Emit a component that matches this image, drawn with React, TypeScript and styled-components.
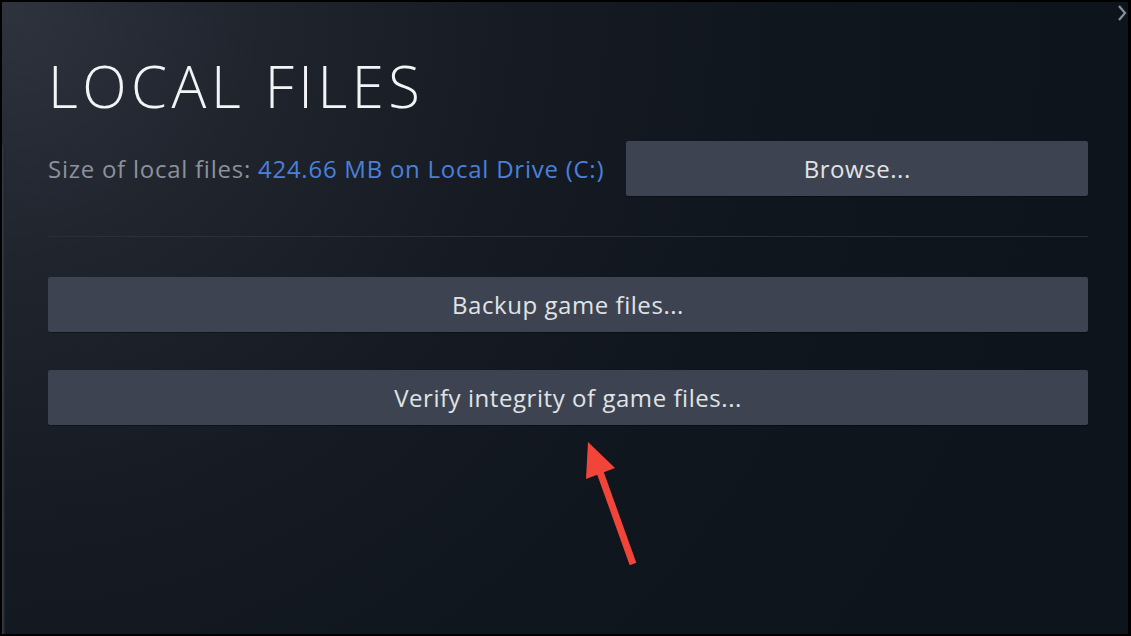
import React from "react";
import styled, { createGlobalStyle } from "styled-components";

const Global = createGlobalStyle`
  html, body { margin: 0; padding: 0; background: #000; }
  body { width: 1131px; height: 636px; overflow: hidden; }
  #root { width: 1131px; height: 636px; }
`;

const Frame = styled.div`
  box-sizing: border-box;
  width: 1131px;
  height: 636px;
  border: 2px solid #000;
  border-right-width: 3px;
  position: relative;
  overflow: hidden;
`;

const Panel = styled.div`
  box-sizing: border-box;
  width: 100%;
  height: 100%;
  padding: 55px 40px 0 46px;
  display: flex;
  flex-direction: column;
  font-family: "Open Sans", "Noto Sans", sans-serif;
  background: radial-gradient(
    circle at 0 0,
    #2e333e 0px,
    #20242d 260px,
    #161b23 520px,
    #10161e 780px,
    #0e141c 1100px
  );
  position: relative;
  &::before {
    content: "";
    position: absolute;
    left: 0;
    top: 143px;
    bottom: 0;
    width: 3px;
    background: linear-gradient(to right, #3a3f4a, #1c2028);
  }
`;

const Title = styled.h1`
  margin: 0;
  font-size: 58px;
  line-height: 57px;
  font-weight: 300;
  letter-spacing: 4.5px;
  color: #f2f4f6;
`;

const SizeRow = styled.div`
  margin-top: 27px;
  display: flex;
  align-items: center;
  gap: 22px;
`;

const SizeLabel = styled.div`
  flex: 1;
  font-size: 24px;
  letter-spacing: 0.75px;
  color: #8b929b;
  white-space: nowrap;
`;

const SizeValue = styled.span`
  color: #4a80dc;
`;

const Button = styled.div<{ $width?: number }>`
  box-sizing: border-box;
  height: 55px;
  ${(p) => (p.$width ? `width: ${p.$width}px; flex: none;` : "width: 100%;")}
  background: #3d4350;
  border-radius: 2px;
  display: flex;
  align-items: center;
  justify-content: center;
  font-size: 24px;
  letter-spacing: 0.55px;
  color: #e0e3e6;
  box-shadow: 0 1px 0 rgba(0, 0, 0, 0.35);
`;

const Divider = styled.div`
  margin-top: 40px;
  height: 1px;
  background: #2a2f38;
`;

const ActionList = styled.div`
  margin-top: 40px;
  display: flex;
  flex-direction: column;
  gap: 38px;
`;

const Close = styled.div`
  position: absolute;
  top: 2px;
  right: 0px;
  width: 12px;
  height: 18px;
`;

const Arrow = styled.svg`
  position: absolute;
  left: 576px;
  top: 434px;
`;

export default function App() {
  return (
    <>
      <Global />
      <Frame>
        <Panel>
          <Title>LOCAL FILES</Title>
          <SizeRow>
            <SizeLabel>
              Size of local files: <SizeValue>424.66 MB on Local Drive (C:)</SizeValue>
            </SizeLabel>
            <Button $width={462}>Browse...</Button>
          </SizeRow>
          <Divider />
          <ActionList>
            <Button>Backup game files...</Button>
            <Button>Verify integrity of game files...</Button>
          </ActionList>
          <Close>
            <svg width="12" height="18" viewBox="0 0 12 18">
              <path d="M3 2 L9 9 L3 16" fill="none" stroke="#8a9099" strokeWidth="2.2" />
            </svg>
          </Close>
        </Panel>
        <Arrow width="70" height="140" viewBox="0 0 70 140">
          <polygon points="10,6 8,43 37,32" fill="#f2453a" />
          <line x1="22" y1="36" x2="55" y2="128" stroke="#f2453a" strokeWidth="7" />
        </Arrow>
      </Frame>
    </>
  );
}
